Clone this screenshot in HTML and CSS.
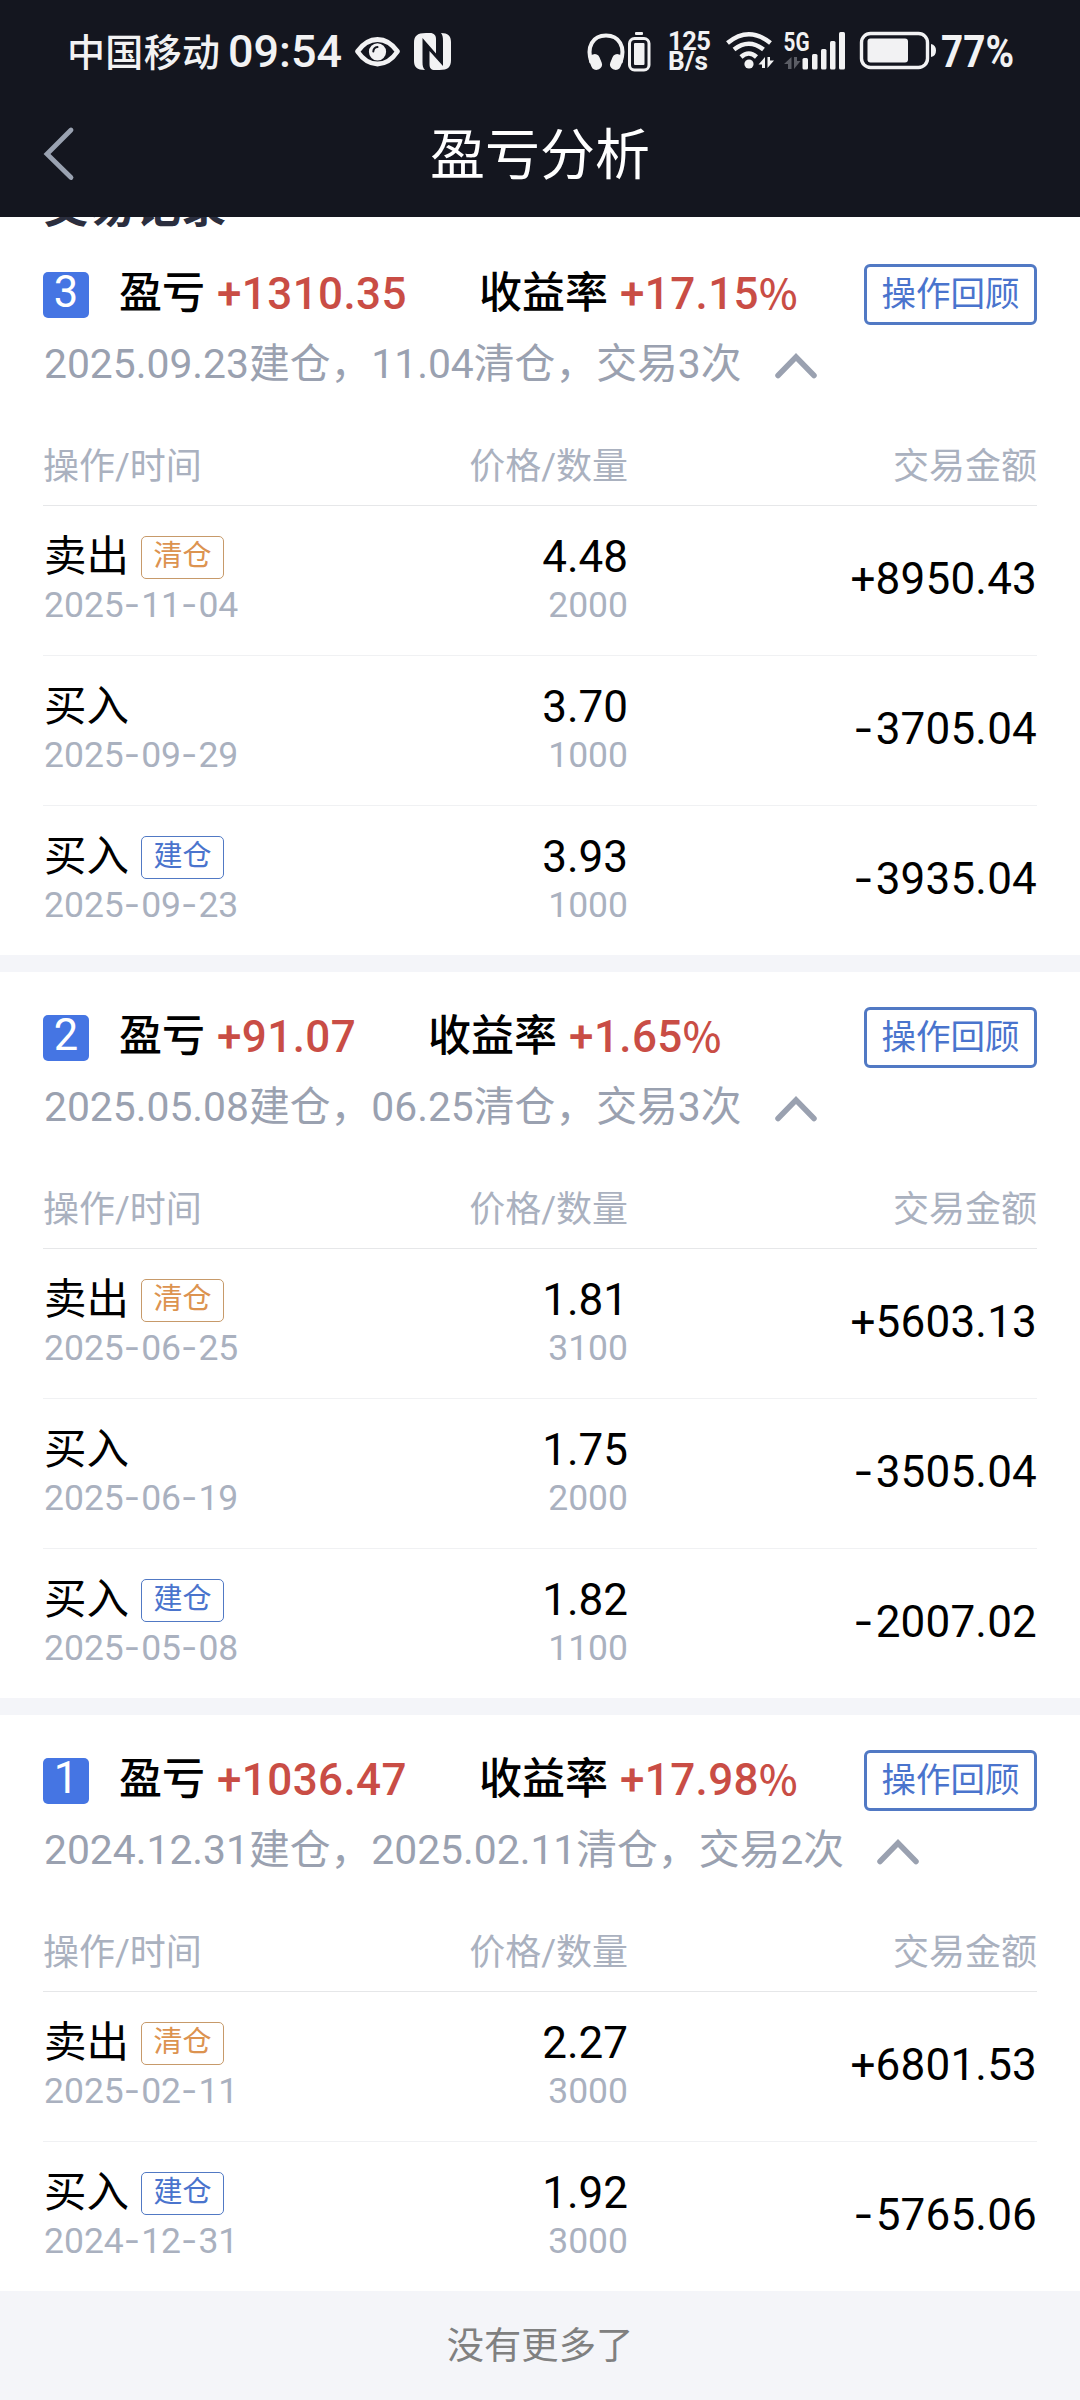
FILE: index.html
```html
<!DOCTYPE html>
<html lang="zh-CN">
<head>
<meta charset="utf-8">
<title>盈亏分析</title>
<link rel="stylesheet" href="styles.css">
</head>
<body>
<header class="top">
  <div class="status">
    <svg class="status-left" width="410" height="60" viewBox="60 20 410 60">
      <g class="status-text">
        <text x="67" y="65.500" font-size="38" textLength="153">中国移动</text>
        <text x="228" y="66.500" font-size="44.500" textLength="114" lengthAdjust="spacingAndGlyphs">09:54</text>
      </g>
      <path d="M357.500 51.500Q366 39.500 377.500 39.500T397.500 51.500Q389 64 377.500 64T357.500 51.500Z" fill="none" stroke="#f2f2f3" stroke-width="4.800" stroke-linejoin="round"/>
      <circle cx="377.500" cy="51.800" r="8.600" fill="#f2f2f3"/>
      <path d="M373.300 51.500Q373.500 47.500 377.500 47" fill="none" stroke="#14161f" stroke-width="2" stroke-linecap="round"/>
      <path d="M426 33C417 33 414 36 414 43V61C414 67 417 70 425 70C423 68 422.500 66 422.500 62V38L436 53.500V39C436 35.500 434 33 430 33Z" fill="#f2f2f3"/>
      <path d="M439.500 70C448 70 451 67 451 60V42C451 36 448 33 441 33C442.500 35 443 37 443 41V66L429.500 51V64C429.500 68 431 70 435 70Z" fill="#f2f2f3"/>
      <path d="M426 45V59Q426 66 428 69" fill="none" stroke="#14161f" stroke-width="2.500"/>
    </svg>
    <svg class="status-right" width="440" height="60" viewBox="580 20 440 60">
      <path d="M591.500 62C586 46 593 35 606 35S626 46 620.500 62" transform="translate(0 .5)" fill="none" stroke="#f2f2f3" stroke-width="4"/>
      <rect x="590" y="54" width="11" height="16" rx="5" transform="rotate(-22 595.500 62)" fill="#f2f2f3"/>
      <rect x="611" y="54" width="11" height="16" rx="5" transform="rotate(22 616.500 62)" fill="#f2f2f3"/>
      <rect x="635" y="32" width="8" height="3" rx="1" fill="#f2f2f3"/>
      <rect x="629.500" y="38.500" width="19.500" height="31.500" rx="5" fill="none" stroke="#f2f2f3" stroke-width="3"/>
      <rect x="634" y="43" width="10.500" height="22" rx="1" fill="#f2f2f3"/>
      <g class="status-small">
        <text x="668" y="50" font-size="25.500" textLength="43">125</text>
        <text x="668" y="69.500" font-size="25.500" textLength="40" lengthAdjust="spacingAndGlyphs">B/s</text>
        <text x="783.500" y="50.500" font-size="25.500" textLength="26" lengthAdjust="spacingAndGlyphs">5G</text>
      </g>
      <g fill="none" stroke="#f2f2f3" stroke-width="4.500">
        <path d="M727.500 43Q748.800 25.500 770.500 43"/>
        <path d="M734 49.500Q748.800 38 763.500 49.500"/>
        <path d="M741 57Q748.800 50 756.500 57"/>
      </g>
      <circle cx="749" cy="64" r="4.600" fill="#f2f2f3"/>
      <path d="M765 57V68H762V64.500H758.500ZM767.500 57H770V60.500H774L767.500 68Z" fill="#f2f2f3"/>
      <path d="M791.500 57V69H788V64H784ZM794 57H797V61H800.500L794 69Z" fill="#5b5d65"/>
      <g fill="#f2f2f3">
        <rect x="802.500" y="58" width="5.500" height="11.500" rx="1.500"/>
        <rect x="812" y="54" width="5.500" height="15.500" rx="1.500"/>
        <rect x="821" y="49" width="5.500" height="20.500" rx="1.500"/>
        <rect x="830" y="41" width="5.500" height="28.500" rx="1.500"/>
        <rect x="839" y="32" width="6" height="37.500" rx="1.500"/>
        <rect x="867.500" y="38.500" width="40.500" height="24" rx="3"/>
        <path d="M931 44Q936 45 936 50.500T931 57Z"/>
      </g>
      <rect x="861.500" y="33.500" width="66" height="34" rx="9" fill="none" stroke="#f2f2f3" stroke-width="3.400"/>
      <g class="status-text battery-text">
        <text x="941" y="66.500" font-size="44.500" textLength="73" lengthAdjust="spacingAndGlyphs">77%</text>
      </g>
    </svg>
  </div>
  <nav class="nav">
    <svg class="back" width="32" height="56" viewBox="0 0 32 56"><path d="M28 4L4 28L28 51.500" fill="none" stroke="#9aa2b1" stroke-width="4.800" stroke-linecap="round"/></svg>
    <h1 class="title">盈亏分析</h1>
  </nav>
</header>
<main class="content">
  <div class="records-clip"><h2 class="records-title">交易记录</h2></div>

  <section class="trade">
    <div class="summary">
      <span class="index">3</span>
      <span class="label">盈亏</span><span class="gain">+1310.35</span>
      <span class="label rate">收益率</span><span class="gain">+17.15<b>%</b></span>
      <button class="review">操作回顾</button>
    </div>
    <div class="meta"><span>2025.09.23建仓，11.04清仓，交易3次</span><svg class="fold" width="42" height="26" viewBox="0 0 42 26"><path d="M3 22.500L21 4L39 22.500" fill="none" stroke="#9aa1b0" stroke-width="5.500" stroke-linecap="round"/></svg></div>
    <div class="cols"><span>操作/时间</span><span>价格/数量</span><span>交易金额</span></div>
    <div class="row">
      <div class="cell"><div class="main">卖出<span class="tag close">清仓</span></div><div class="sub">2025<i>-</i>11<i>-</i>04</div></div>
      <div class="cell"><div class="num">4.48</div><div class="sub">2000</div></div>
      <div class="amount">+8950.43</div>
    </div>
    <div class="row">
      <div class="cell"><div class="main">买入</div><div class="sub">2025<i>-</i>09<i>-</i>29</div></div>
      <div class="cell"><div class="num">3.70</div><div class="sub">1000</div></div>
      <div class="amount"><i>-</i>3705.04</div>
    </div>
    <div class="row">
      <div class="cell"><div class="main">买入<span class="tag open">建仓</span></div><div class="sub">2025<i>-</i>09<i>-</i>23</div></div>
      <div class="cell"><div class="num">3.93</div><div class="sub">1000</div></div>
      <div class="amount"><i>-</i>3935.04</div>
    </div>
  </section>

  <section class="trade">
    <div class="summary">
      <span class="index">2</span>
      <span class="label">盈亏</span><span class="gain">+91.07</span>
      <span class="label rate">收益率</span><span class="gain">+1.65<b>%</b></span>
      <button class="review">操作回顾</button>
    </div>
    <div class="meta"><span>2025.05.08建仓，06.25清仓，交易3次</span><svg class="fold" width="42" height="26" viewBox="0 0 42 26"><path d="M3 22.500L21 4L39 22.500" fill="none" stroke="#9aa1b0" stroke-width="5.500" stroke-linecap="round"/></svg></div>
    <div class="cols"><span>操作/时间</span><span>价格/数量</span><span>交易金额</span></div>
    <div class="row">
      <div class="cell"><div class="main">卖出<span class="tag close">清仓</span></div><div class="sub">2025<i>-</i>06<i>-</i>25</div></div>
      <div class="cell"><div class="num">1.81</div><div class="sub">3100</div></div>
      <div class="amount">+5603.13</div>
    </div>
    <div class="row">
      <div class="cell"><div class="main">买入</div><div class="sub">2025<i>-</i>06<i>-</i>19</div></div>
      <div class="cell"><div class="num">1.75</div><div class="sub">2000</div></div>
      <div class="amount"><i>-</i>3505.04</div>
    </div>
    <div class="row">
      <div class="cell"><div class="main">买入<span class="tag open">建仓</span></div><div class="sub">2025<i>-</i>05<i>-</i>08</div></div>
      <div class="cell"><div class="num">1.82</div><div class="sub">1100</div></div>
      <div class="amount"><i>-</i>2007.02</div>
    </div>
  </section>

  <section class="trade">
    <div class="summary">
      <span class="index">1</span>
      <span class="label">盈亏</span><span class="gain">+1036.47</span>
      <span class="label rate">收益率</span><span class="gain">+17.98<b>%</b></span>
      <button class="review">操作回顾</button>
    </div>
    <div class="meta"><span>2024.12.31建仓，2025.02.11清仓，交易2次</span><svg class="fold" width="42" height="26" viewBox="0 0 42 26"><path d="M3 22.500L21 4L39 22.500" fill="none" stroke="#9aa1b0" stroke-width="5.500" stroke-linecap="round"/></svg></div>
    <div class="cols"><span>操作/时间</span><span>价格/数量</span><span>交易金额</span></div>
    <div class="row">
      <div class="cell"><div class="main">卖出<span class="tag close">清仓</span></div><div class="sub">2025<i>-</i>02<i>-</i>11</div></div>
      <div class="cell"><div class="num">2.27</div><div class="sub">3000</div></div>
      <div class="amount">+6801.53</div>
    </div>
    <div class="row">
      <div class="cell"><div class="main">买入<span class="tag open">建仓</span></div><div class="sub">2024<i>-</i>12<i>-</i>31</div></div>
      <div class="cell"><div class="num">1.92</div><div class="sub">3000</div></div>
      <div class="amount"><i>-</i>5765.06</div>
    </div>
  </section>
</main>
<footer class="end">没有更多了</footer>
</body>
</html>
```
FILE: styles.css
```css
* { box-sizing: border-box; margin: 0; padding: 0; }
body {
  width: 1080px;
  height: 2400px;
  overflow: hidden;
  display: flex;
  flex-direction: column;
  background: #f4f5f9;
  color: #000;
  font-family: Roboto, "Noto Sans CJK SC", sans-serif;
}
i { font-family: Inter, sans-serif; font-style: normal; line-height: 1; }

.top { height: 217px; background: #14161f; color: #fff; flex: none; }
.status { height: 98px; display: flex; justify-content: space-between; padding: 20px 60px 0; }
.status svg { flex: none; display: block; overflow: visible; }
.status-text { fill: #f2f2f3; font-weight: 500; }
.battery-text { font-weight: 700; }
.status-small { fill: #f2f2f3; font-weight: 700; }
.nav { height: 112px; display: grid; grid-template-columns: 90px 1fr 90px; align-items: center; }
.back { margin-left: 43px; }
.title { font-size: 55px; font-weight: 400; line-height: 80px; text-align: center; padding-top: 2px; }

.content { background: #fff; flex: none; }
.records-clip { height: 12px; overflow: hidden; display: flex; align-items: flex-end; }
.records-title { font-size: 46px; line-height: 50px; font-weight: 700; color: #2b2e3e; padding-left: 43px; margin-bottom: -2px; }

.trade { padding: 0 43px; }
.trade + .trade { border-top: 17px solid #f4f5f9; }
.summary { height: 96px; padding-top: 35px; display: flex; align-items: center; white-space: nowrap; }
.index {
  width: 46px; height: 46px; margin: 1px 30px 0 0; border-radius: 5px;
  background: #4575e3; color: #fff; font-size: 43.5px; line-height: 41px; text-align: center;
}
.label { font-size: 43px; font-weight: 500; line-height: 61px; margin: -2px 12px 0 0; }
.rate { margin-left: 72px; }
.gain { font-size: 44px; font-weight: 500; line-height: 56px; margin-top: -2px; letter-spacing: .4px; color: #c94d45; }
.gain b { font-family: "Noto Sans CJK SC", sans-serif; font-size: 41px; font-weight: 500; line-height: 1; }
.review {
  width: 173px; height: 61px; margin-left: auto; border: 3px solid #5179c4; border-radius: 6px;
  background: #fff; color: #4a74cd; font: inherit; font-size: 34.5px; line-height: 55px; text-align: center;
}
.meta { height: 76px; padding: 1px 0 0 1px; display: flex; align-items: center; font-size: 40.8px; line-height: 60px; color: #9aa1b0; white-space: nowrap; }
.fold { margin: 4px 0 0 33px; }
.cols, .row { display: grid; grid-template-columns: 300px 285px 409px; }
.cols {
  height: 105px; padding-top: 43px; border-bottom: 1px solid #e6e7e9;
  font-size: 36px; line-height: 46px; color: #aab1bf;
}
.cols span:not(:first-child) { text-align: right; }
.row { height: 150px; padding-top: 26px; border-bottom: 1px solid #f0f1f3; }
.row:last-child { border-bottom: 0; height: 149px; }
.row .cell + .cell { text-align: right; }
.main, .num { height: 50px; line-height: 50px; }
.main { display: flex; align-items: center; font-size: 42.5px; padding-left: 1px; }
.num { font-size: 44px; }
.sub { height: 46px; line-height: 46px; font-size: 35.5px; color: #aab1bf; padding-left: 1px; }
.sub i { margin-right: 1px; }
.tag {
  width: 83px; height: 43px; margin: 1px 0 0 12px; border: 1px solid; border-radius: 5px;
  font-size: 29px; line-height: 39px; text-align: center;
}
.close { color: #dc9350; border-color: #c79a6a; }
.open { color: #4a74cd; border-color: #5179c4; }
.amount { font-size: 44px; line-height: 94px; letter-spacing: .2px; text-align: right; }
.amount i { margin-right: 2px; }

.end { flex: 1; font-size: 37.3px; line-height: 111px; text-align: center; color: #808080; }
```
